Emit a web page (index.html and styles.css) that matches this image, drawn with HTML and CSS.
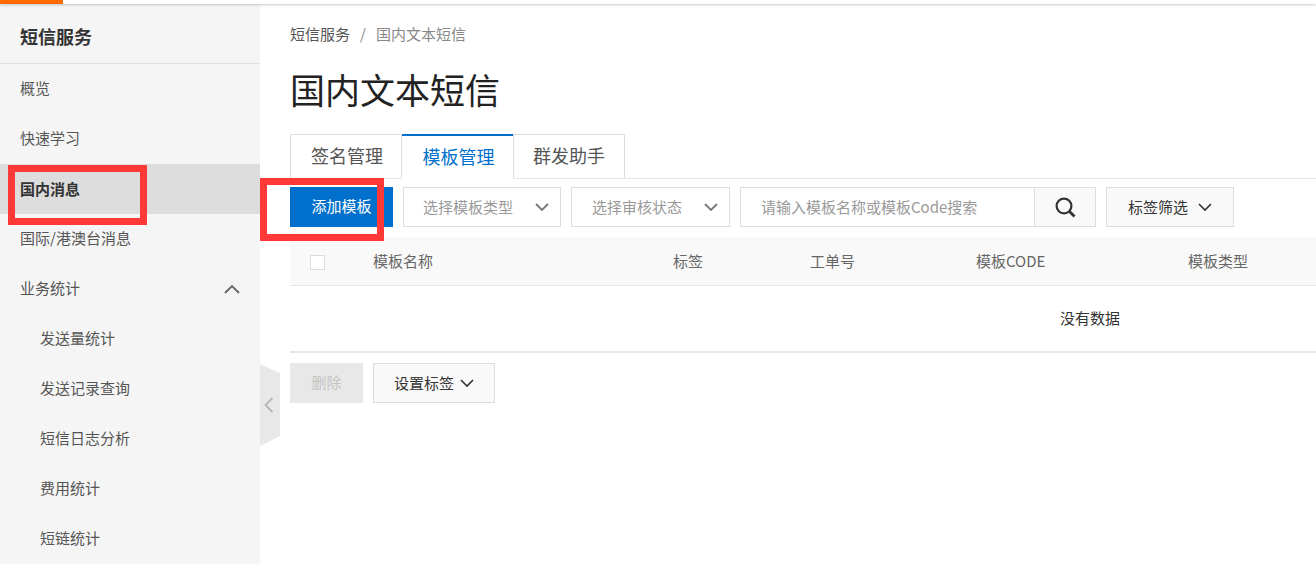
FILE: index.html
```html
<!DOCTYPE html>
<html lang="zh-CN">
<head>
    <meta charset="UTF-8">
    <title>国内文本短信</title>
    <link rel="stylesheet" href="styles.css">
</head>
<body>
<div class="topbar"><div class="topbar-logo"></div></div>
<div class="layout">
    <div class="sidebar">
        <div class="sidebar-title">短信服务</div>
        <div class="nav-item">概览</div>
        <div class="nav-item">快速学习</div>
        <div class="nav-item nav-active">国内消息</div>
        <div class="nav-item">国际/港澳台消息</div>
        <div class="nav-item nav-group">
            <span class="nav-group-label">业务统计</span>
            <svg class="nav-arrow" width="16" height="10" viewBox="0 0 16 10"><path d="M1 9l7-7 7 7" fill="none" stroke="#666" stroke-width="1.8"/></svg>
        </div>
        <div class="nav-item nav-sub">发送量统计</div>
        <div class="nav-item nav-sub">发送记录查询</div>
        <div class="nav-item nav-sub">短信日志分析</div>
        <div class="nav-item nav-sub">费用统计</div>
        <div class="nav-item nav-sub">短链统计</div>
    </div>
    <div class="main">
        <div class="breadcrumb">
            <span>短信服务</span>
            <span class="crumb-sep">/</span>
            <span class="crumb-current">国内文本短信</span>
        </div>
        <h1 class="page-title">国内文本短信</h1>
        <div class="tabs">
            <div class="tab">签名管理</div>
            <div class="tab tab-active">模板管理</div>
            <div class="tab">群发助手</div>
        </div>
        <div class="toolbar">
            <div class="btn btn-primary">添加模板</div>
            <div class="select select-type">
                <span>选择模板类型</span>
                <svg width="14" height="9" viewBox="0 0 14 9"><path d="M1 1l6 6 6-6" fill="none" stroke="#777" stroke-width="1.8"/></svg>
            </div>
            <div class="select select-status">
                <span>选择审核状态</span>
                <svg width="14" height="9" viewBox="0 0 14 9"><path d="M1 1l6 6 6-6" fill="none" stroke="#777" stroke-width="1.8"/></svg>
            </div>
            <div class="search">
                <div class="search-input">请输入模板名称或模板Code搜索</div>
                <div class="search-btn">
                    <svg width="21" height="21" viewBox="0 0 21 21"><circle cx="9" cy="9" r="7.4" fill="none" stroke="#333" stroke-width="2.2"/><path d="M14 14l5.500 5.500" stroke="#333" stroke-width="2.8"/></svg>
                </div>
            </div>
            <div class="btn btn-default btn-filter">
                <span>标签筛选</span>
                <svg width="14" height="9" viewBox="0 0 14 9"><path d="M1 1l6 6 6-6" fill="none" stroke="#333" stroke-width="1.6"/></svg>
            </div>
        </div>
        <div class="table">
            <div class="table-head">
                <div class="col-check"><div class="checkbox"></div></div>
                <div>模板名称</div>
                <div>标签</div>
                <div>工单号</div>
                <div>模板CODE</div>
                <div>模板类型</div>
            </div>
            <div class="table-empty">没有数据</div>
        </div>
        <div class="footer-actions">
            <div class="btn btn-disabled">删除</div>
            <div class="btn btn-default btn-tag">
                <span>设置标签</span>
                <svg width="14" height="9" viewBox="0 0 14 9"><path d="M1 1l6 6 6-6" fill="none" stroke="#333" stroke-width="1.6"/></svg>
            </div>
        </div>
    </div>
</div>
<svg class="collapse" width="20" height="82" viewBox="0 0 20 82">
    <path d="M0 0l20 9v63L0 82z" fill="#e8e8e8"/>
    <path d="M12.500 34l-7 7 7 7" fill="none" stroke="#b5b5b5" stroke-width="1.800"/>
</svg>
<div class="mark mark-nav"></div>
<div class="mark mark-btn"></div>
</body>
</html>
```

FILE: styles.css
```css
html, body {
    margin: 0;
    padding: 0;
    height: 100%;
    overflow: hidden;
}
body {
    position: relative;
    background: #fff;
    color: #333;
    font-family: "Noto Sans CJK SC", "Liberation Sans", sans-serif;
    font-size: 15px;
}
.topbar {
    position: relative;
    height: 4px;
    background: #fff;
    box-shadow: 0 1px 3px rgba(0, 0, 0, 0.2);
}
.topbar-logo {
    width: 63px;
    height: 4px;
    background: #ff6a00;
}
.layout {
    display: flex;
    height: 560px;
}
.sidebar {
    flex: 0 0 260px;
    background: #f5f5f5;
}
.sidebar-title {
    height: 59px;
    line-height: 65px;
    padding-left: 20px;
    font-size: 18px;
    font-weight: 700;
    border-bottom: 1px solid #e0e0e0;
}
.nav-item {
    height: 50px;
    line-height: 48px;
    padding-left: 20px;
    color: #555;
}
.nav-active {
    background: #ddd;
    color: #333;
    font-weight: 700;
    line-height: 50px;
}
.nav-group {
    display: flex;
    justify-content: space-between;
    align-items: center;
    padding-right: 20px;
}
.nav-group-label {
    margin-bottom: 2px;
}
.nav-sub {
    padding-left: 40px;
}
.main {
    flex: 1;
    min-width: 0;
    padding-left: 30px;
    overflow: hidden;
}
.breadcrumb {
    display: flex;
    gap: 10px;
    height: 22px;
    margin-top: 19px;
    line-height: 22px;
    color: #555;
}
.crumb-sep, .crumb-current {
    color: #888;
}
.page-title {
    height: 54px;
    margin: 18px 0 17px;
    font-size: 35px;
    font-weight: 400;
    line-height: 52px;
    color: #222;
}
.tabs {
    display: flex;
    height: 44px;
    border-bottom: 1px solid #e6e6e6;
}
.tab {
    width: 108px;
    height: 43px;
    line-height: 41px;
    padding-left: 2px;
    text-align: center;
    font-size: 18px;
    color: #555;
    background: #fff;
    border: 1px solid #ddd;
    border-bottom: 0;
}
.tab-active {
    width: 109px;
    color: #0070cc;
    border-top: 2px solid #0070cc;
    border-left: 0;
    border-right: 0;
    line-height: 40px;
}
.tab-active + .tab {
    width: 110px;
    padding-left: 0;
}
.toolbar {
    display: flex;
    gap: 10px;
    margin-top: 8px;
    height: 40px;
}
.btn {
    box-sizing: border-box;
    height: 40px;
    line-height: 38px;
    text-align: center;
}
.btn-primary {
    width: 103px;
    background: #0070cc;
    color: #fff;
}
.btn-default {
    display: flex;
    justify-content: center;
    align-items: center;
    background: #f9f9f9;
    border: 1px solid #ddd;
}
.btn-filter {
    width: 128px;
    gap: 10px;
}
.select {
    box-sizing: border-box;
    display: flex;
    justify-content: space-between;
    align-items: center;
    height: 40px;
    line-height: 36px;
    padding: 0 11px 0 19px;
    border: 1px solid #ddd;
    color: #999;
}
.select-type {
    width: 158px;
}
.select-status {
    width: 159px;
    padding-left: 20px;
}
.search {
    display: flex;
    width: 356px;
}
.search-input {
    box-sizing: border-box;
    flex: 1;
    height: 40px;
    line-height: 38px;
    padding-left: 20px;
    border: 1px solid #ddd;
    color: #999;
}
.search-btn {
    box-sizing: border-box;
    display: flex;
    justify-content: center;
    align-items: center;
    width: 61px;
    height: 40px;
    background: #f9f9f9;
    border: 1px solid #ddd;
    border-left: 0;
}
.table {
    width: 1600px;
    margin-top: 10px;
    border-bottom: 2px solid #e8e8e8;
}
.table-head {
    box-sizing: border-box;
    display: grid;
    grid-template-columns: 83px 300px 137px 166px 212px 1fr;
    align-items: center;
    height: 49px;
    padding-bottom: 2px;
    background: #f9f9f9;
    border-bottom: 1px solid #e6e6e6;
    color: #666;
}
.col-check {
    padding-left: 20px;
}
.checkbox {
    width: 13px;
    height: 13px;
    margin-top: 4px;
    background: #fff;
    border: 1px solid #ddd;
}
.table-empty {
    height: 65px;
    line-height: 63px;
    text-align: center;
}
.footer-actions {
    display: flex;
    gap: 10px;
    margin-top: 10px;
}
.btn-disabled {
    width: 73px;
    background: #e8e8e8;
    color: #c4c4c4;
}
.btn-tag {
    width: 122px;
    gap: 6px;
}
.collapse {
    position: absolute;
    left: 260px;
    top: 364px;
}
.mark {
    position: absolute;
    box-sizing: border-box;
    border: 7px solid #ff3838;
}
.mark-nav {
    left: 8px;
    top: 165px;
    width: 139px;
    height: 60px;
}
.mark-btn {
    left: 260px;
    top: 178px;
    width: 124px;
    height: 63px;
}
```
